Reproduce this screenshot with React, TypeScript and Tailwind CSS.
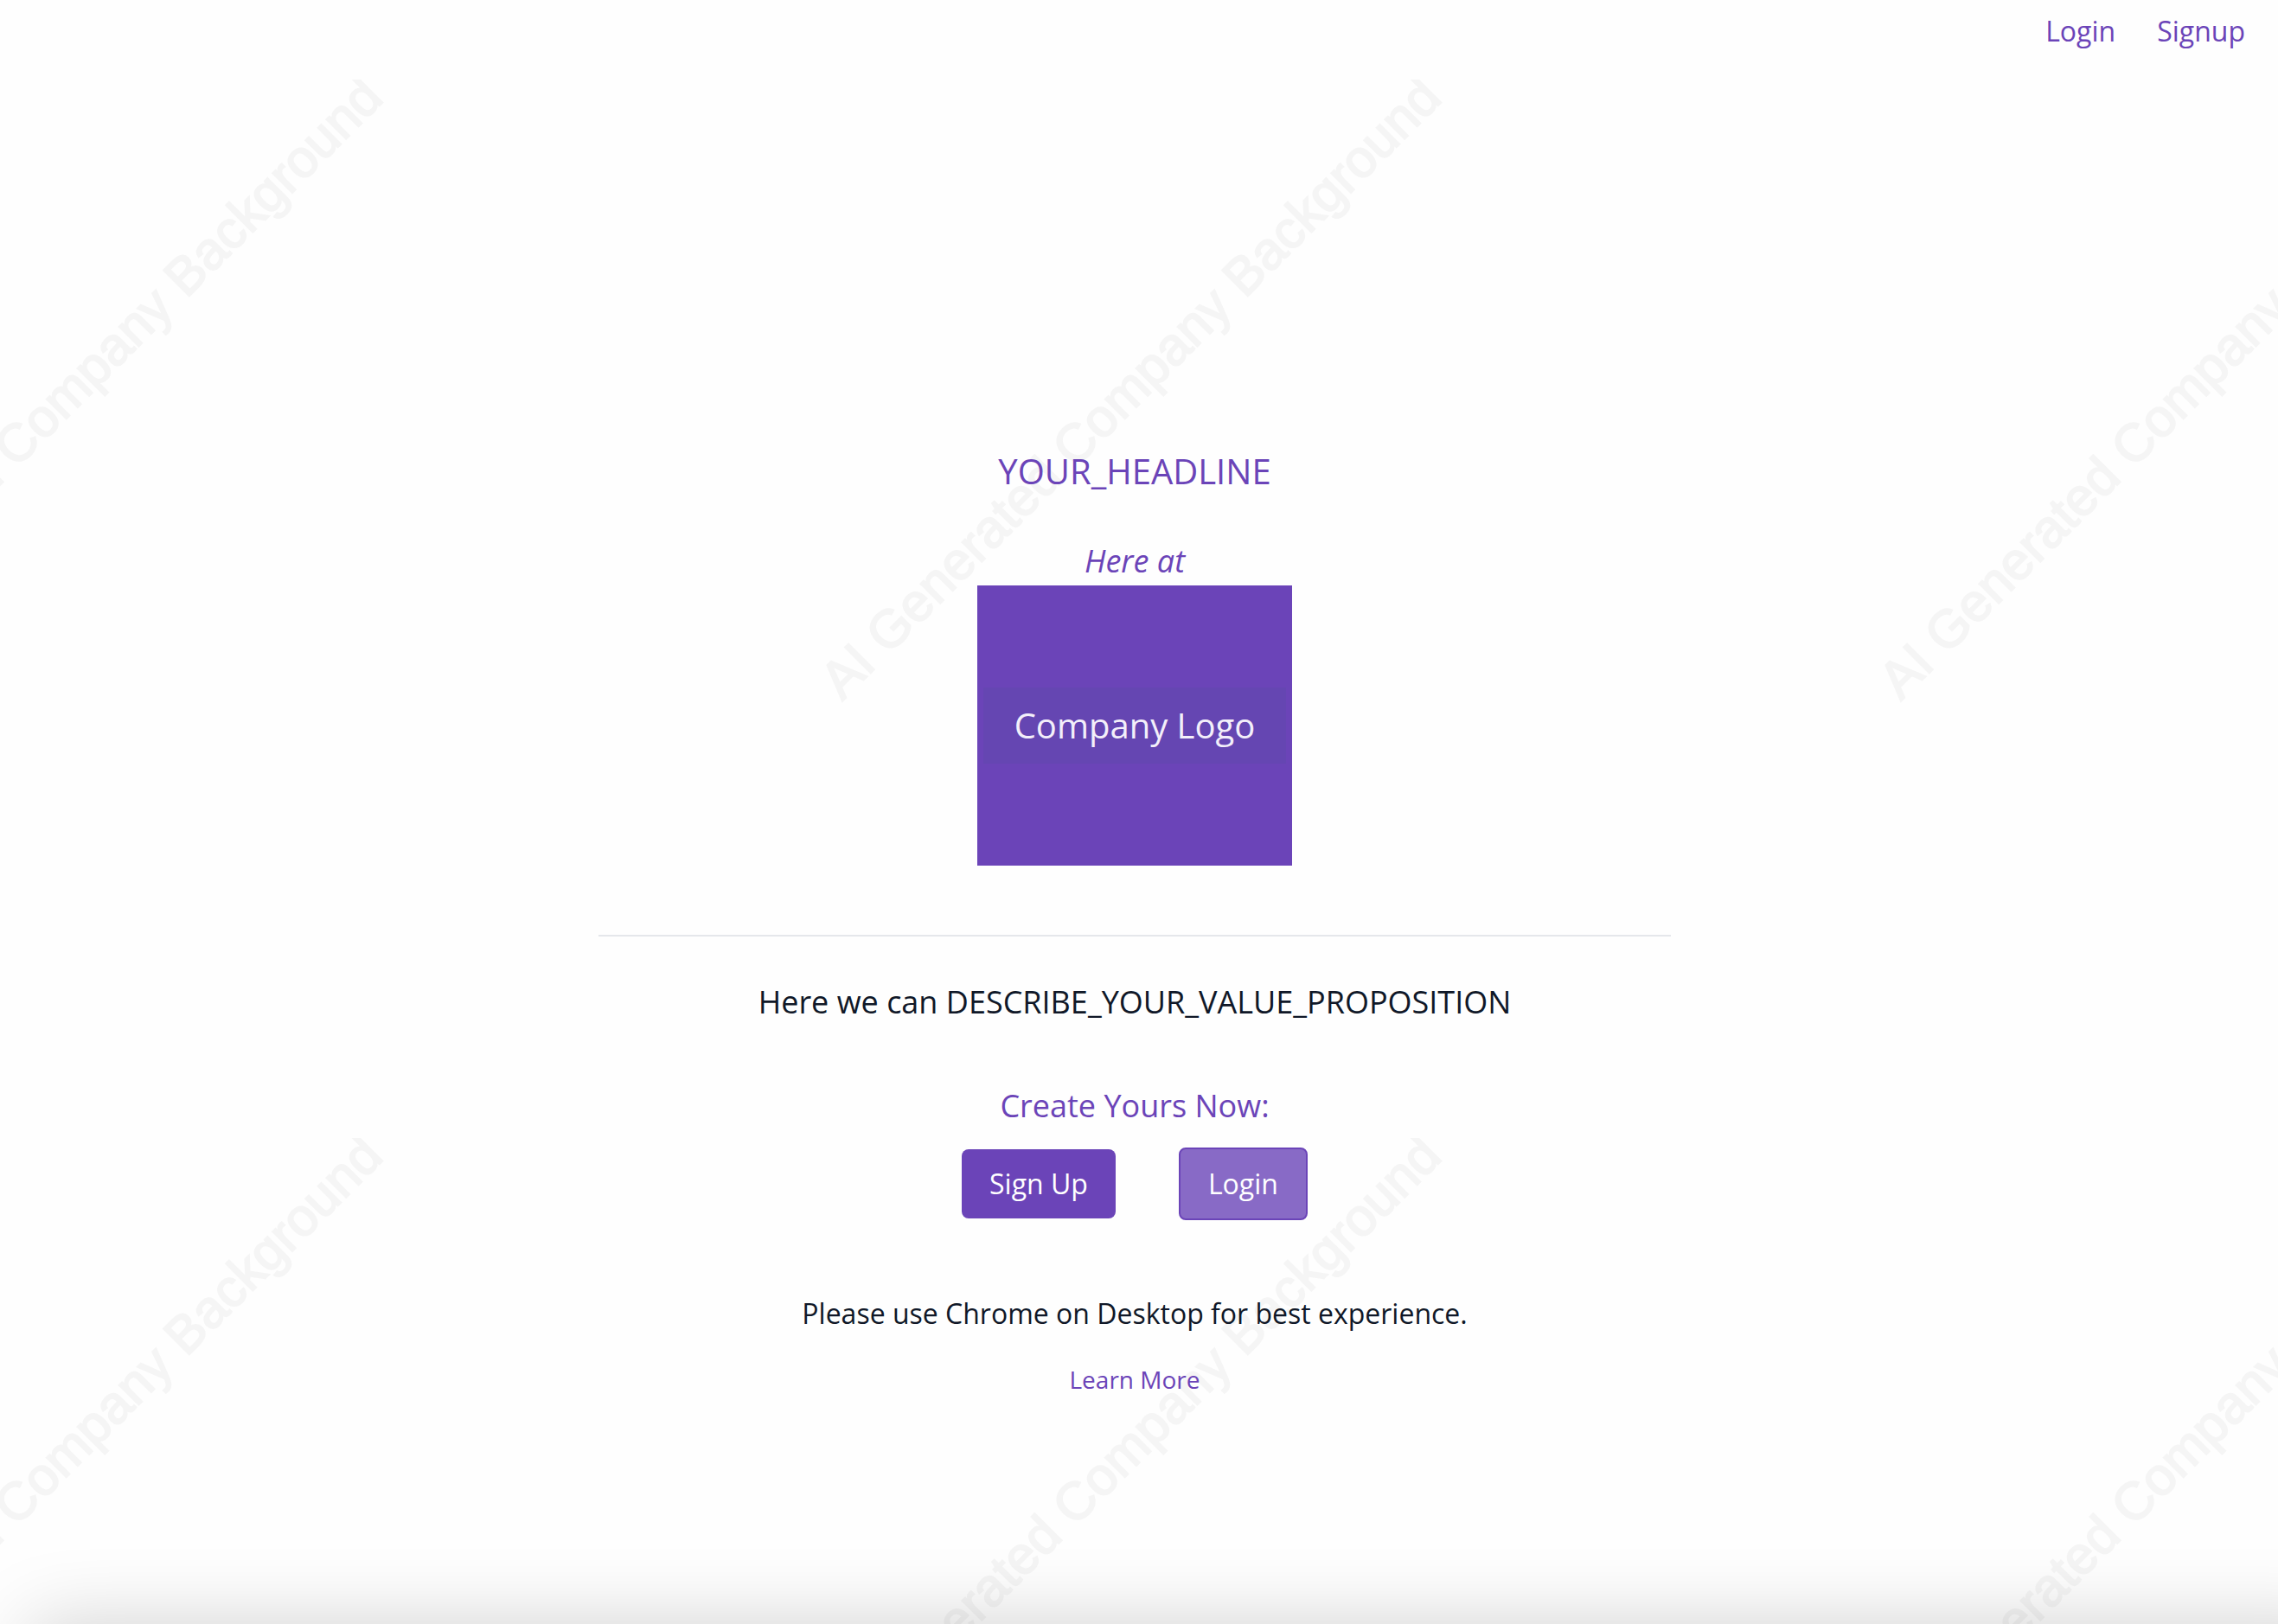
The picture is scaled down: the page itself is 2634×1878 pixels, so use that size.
function Watermark() {
  return (
    <svg className="pointer-events-none absolute inset-0 h-full w-full" aria-hidden="true">
      <defs>
        <pattern id="watermark" y="92" width="1224" height="1224" patternUnits="userSpaceOnUse">
          {[-250, 974].map((x) => (
            <text
              key={x}
              transform={`translate(${x} 719) rotate(-45)`}
              fontFamily="Liberation Sans, sans-serif"
              fontSize="61"
              fill="#f5f5f5"
              stroke="#f5f5f5"
              strokeWidth="2"
            >
              AI Generated Company Background
            </text>
          ))}
        </pattern>
      </defs>
      <rect width="100%" height="100%" fill="url(#watermark)" />
    </svg>
  );
}

function Nav() {
  return (
    <nav className="flex justify-end gap-12 px-7 py-3 text-[32px] leading-[48px] text-[#6b44b8]">
      <a href="#login">Login</a>
      <a href="#signup">Signup</a>
    </nav>
  );
}

function CompanyLogo() {
  return (
    <div className="flex h-[324px] w-[364px] items-center justify-center bg-[#6b44b8]">
      <div className="flex h-[88px] w-[350px] items-center justify-center bg-[#6546b2] text-[40px] text-[#f3effa]">
        Company Logo
      </div>
    </div>
  );
}

export default function App() {
  return (
    <div className="relative min-h-screen overflow-hidden bg-[#fefefe] pr-[10px] font-['Open_Sans',sans-serif]">
      <Watermark />
      <div className="relative">
        <Nav />
        <main className="mx-auto flex max-w-[1240px] flex-col items-center pt-[445px] text-center text-[#6b44b8]">
          <h1 className="text-[40px] leading-[56px]">YOUR_HEADLINE</h1>
          <p className="mt-12 text-[36px] leading-[56px] italic">Here at</p>
          <CompanyLogo />
          <hr className="mt-20 w-full border-t-2 border-gray-200" />
          <p className="mt-12 text-[36px] leading-[56px] text-gray-900">
            Here we can DESCRIBE_YOUR_VALUE_PROPOSITION
          </p>
          <h2 className="mt-16 text-[36px] leading-[56px]">Create Yours Now:</h2>
          <div className="mt-5 flex items-center gap-[73px] text-[32px] leading-[48px] text-white">
            <button type="button" className="rounded-lg bg-[#6b44b8] px-8 py-4">
              Sign Up
            </button>
            <button type="button" className="rounded-lg border-2 border-[#6b44b8] bg-[#886ac6] px-8 py-4">
              Login
            </button>
          </div>
          <p className="mt-[84px] text-[32px] leading-[48px] text-gray-900">
            Please use Chrome on Desktop for best experience.
          </p>
          <a href="#learn-more" className="mt-8 text-[28px] leading-[40px]">
            Learn More
          </a>
        </main>
      </div>
      <div className="pointer-events-none absolute top-full -right-20 left-[36px] h-40 shadow-[0_0_90px_rgba(0,0,0,0.18)]" />
    </div>
  );
}
